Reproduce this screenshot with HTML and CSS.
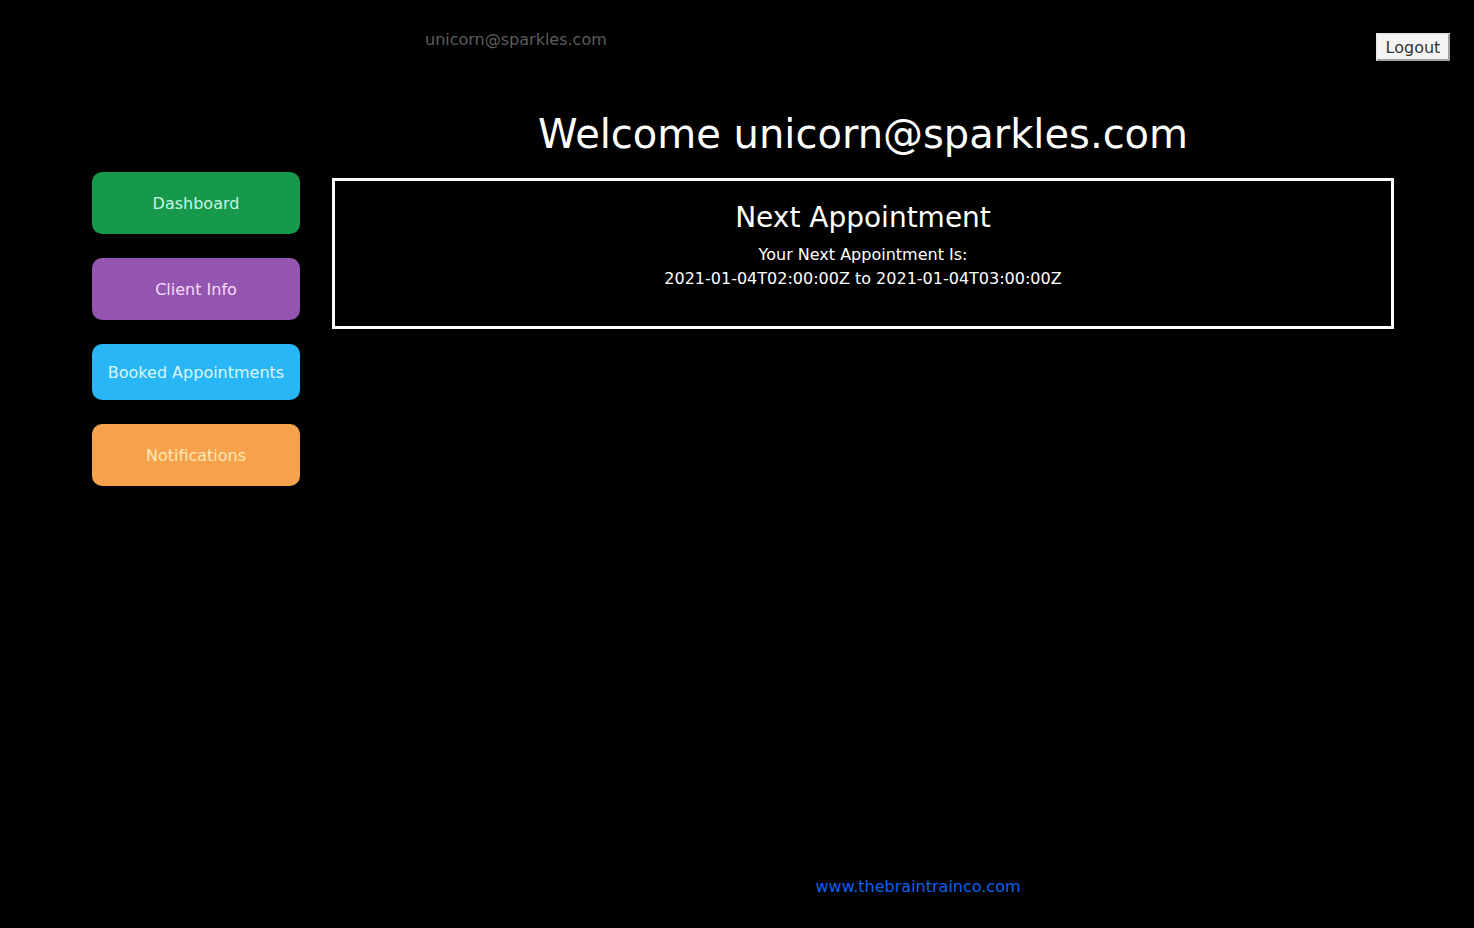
FILE: index.html
```html
<!DOCTYPE html>
<html lang="en">
<head>
<meta charset="utf-8">
<title>Dashboard</title>
<link rel="stylesheet" href="styles.css">
</head>
<body>
<div class="page">
  <header class="topbar">
    <span class="user-email">unicorn@sparkles.com</span>
    <button class="logout" type="button">Logout</button>
  </header>
  <div class="layout">
    <nav class="sidebar">
      <a class="nav-btn nav-dashboard" href="#">Dashboard</a>
      <a class="nav-btn nav-client" href="#">Client Info</a>
      <a class="nav-btn nav-booked" href="#">Booked Appointments</a>
      <a class="nav-btn nav-notif" href="#">Notifications</a>
    </nav>
    <main class="content">
      <h1 class="welcome">Welcome unicorn@sparkles.com</h1>
      <section class="appt-card">
        <h2 class="appt-title">Next Appointment</h2>
        <p class="appt-text">Your Next Appointment Is:<br>2021-01-04T02:00:00Z to 2021-01-04T03:00:00Z</p>
      </section>
    </main>
  </div>
  <footer class="footer">
    <a class="footer-link" href="#">www.thebraintrainco.com</a>
  </footer>
</div>
</body>
</html>
```
FILE: styles.css
```css
* { box-sizing: border-box; }
html, body {
  margin: 0;
  padding: 0;
  background: #000;
}
body {
  font-family: "DejaVu Sans", sans-serif;
  color: #fff;
  font-size: 16px;
}
.page {
  min-height: 100vh;
  display: flex;
  flex-direction: column;
}
.topbar {
  height: 111px;
  display: flex;
  justify-content: space-between;
  align-items: flex-start;
  padding: 0 24px 0 425px;
}
.user-email {
  margin-top: 30px;
  color: #5c5c5c;
  line-height: 19px;
}
.logout {
  margin-top: 33px;
  font-family: "DejaVu Sans", sans-serif;
  font-size: 16px;
  line-height: 19px;
  height: 28px;
  width: 74px;
  padding: 3px 0 2px;
  color: #333;
  background: #f4f4f4;
  border: 2px solid;
  border-color: #e8e8e8 #a0a0a0 #a0a0a0 #e8e8e8;
}
.layout {
  display: flex;
  padding-left: 92px;
  gap: 32px;
}
.sidebar {
  width: 208px;
  padding-top: 61px;
  display: flex;
  flex-direction: column;
  gap: 24px;
}
.nav-btn {
  display: flex;
  align-items: center;
  justify-content: center;
  height: 62px;
  border-radius: 10px;
  text-decoration: none;
  font-size: 16px;
}
.nav-dashboard { background: #16994b; color: #c6f6e0; }
.nav-client { background: #9455b0; color: #f6dbff; }
.nav-booked { background: #29b6f6; color: #dcf6ff; height: 56px; }
.nav-notif { background: #f6a14c; color: #ffe9b5; }
.content {
  width: 1062px;
}
.welcome {
  margin: 0;
  font-size: 40px;
  font-weight: normal;
  line-height: 47px;
  text-align: center;
}
.appt-card {
  margin-top: 20px;
  height: 151px;
  border: 3px solid #fff;
  text-align: center;
  padding-top: 20px;
}
.appt-title {
  margin: 0;
  font-size: 28px;
  font-weight: normal;
  line-height: 33px;
}
.appt-text {
  margin: 9px 0 0;
  line-height: 24px;
}
.footer {
  margin-top: auto;
  padding: 0 0 32px 362px;
  text-align: center;
  line-height: 19px;
}
.footer-link {
  color: #0a62f0;
  text-decoration: none;
}
```
